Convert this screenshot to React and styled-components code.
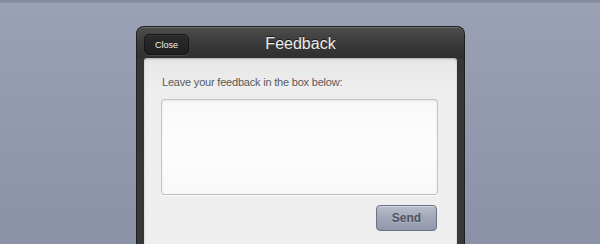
import styled, { createGlobalStyle } from "styled-components";

const GlobalStyle = createGlobalStyle`
  html, body {
    margin: 0;
    height: 100%;
  }
  body {
    font-family: "Liberation Sans", Arial, sans-serif;
    background: linear-gradient(#838a9e 0, #838a9e 2px, #9aa1b5 3px, #9198ad 60%, #8b92a7 100%);
    overflow: hidden;
  }
`;

const Page = styled.div`
  height: 244px;
  padding-top: 26px;
  box-sizing: border-box;
  overflow: hidden;
`;

const Frame = styled.div`
  margin-left: 136px;
  width: 329px;
  height: 218px;
  box-sizing: border-box;
  padding: 0 7px;
  border: 1px solid #1f1f1f;
  border-bottom: none;
  border-radius: 8px 8px 0 0;
  background: linear-gradient(#4d4d4d 0, #393939 18px, #2f2f2f 31px, #363636 32px, #383838 100%);
  box-shadow: inset 0 1px 0 rgba(255, 255, 255, 0.18);
  display: flex;
  flex-direction: column;
`;

const Header = styled.div`
  display: grid;
  grid-template-columns: 1fr auto 1fr;
  align-items: start;
  height: 31px;
  flex-shrink: 0;
  box-sizing: border-box;
  padding-top: 7px;
`;

const CloseButton = styled.button`
  justify-self: start;
  width: 45px;
  height: 21px;
  padding: 0;
  border: 1px solid #161616;
  border-radius: 5px;
  background: linear-gradient(#2c2c2c, #1f1f1f);
  box-shadow: 0 1px 0 rgba(255, 255, 255, 0.1), inset 0 1px 0 rgba(255, 255, 255, 0.06);
  color: #f2f2f2;
  font-family: "Liberation Sans", Arial, sans-serif;
  font-size: 9px;
  cursor: pointer;
`;

const Title = styled.h1`
  margin: 0;
  margin-top: 1px;
  font-size: 16px;
  font-weight: normal;
  line-height: 18px;
  color: #ededed;
  text-shadow: 0 -1px 0 rgba(0, 0, 0, 0.6);
`;

const Panel = styled.div`
  flex: 1;
  padding: 18px 19px 0 17px;
  border-radius: 3px 3px 0 0;
  background: linear-gradient(#e6e6e6, #eeeeee 30px, #efefef);
  box-shadow: inset 0 1px 2px rgba(0, 0, 0, 0.25);
  display: flex;
  flex-direction: column;
`;

const Label = styled.label`
  padding-left: 1px;
  font-size: 11px;
  line-height: 13px;
  color: #5a5a5a;
  letter-spacing: -0.2px;
`;

const Box = styled.textarea`
  margin-top: 10px;
  height: 96px;
  flex-shrink: 0;
  box-sizing: border-box;
  resize: none;
  border: 1px solid #c4c4c4;
  border-bottom-color: #bdbdbd;
  border-radius: 4px;
  background: linear-gradient(#f8f8f8, #fdfdfd 50%, #f8f8f8);
  box-shadow: inset 0 1px 2px rgba(0, 0, 0, 0.08), 0 1px 0 #fafafa;
  outline: none;
`;

const Actions = styled.div`
  display: flex;
  justify-content: flex-end;
  margin-top: 10px;
  padding-right: 1px;
`;

const SendButton = styled.button`
  width: 61px;
  height: 26px;
  padding: 0;
  border: 1px solid #6b7183;
  border-radius: 4px;
  background: linear-gradient(#b9bdcb, #a2a7b8 50%, #9197aa);
  box-shadow: inset 0 1px 0 rgba(255, 255, 255, 0.35);
  color: #4e5465;
  font-family: "Liberation Sans", Arial, sans-serif;
  font-size: 12px;
  font-weight: bold;
  text-shadow: 0 1px 0 rgba(255, 255, 255, 0.25);
  cursor: pointer;
`;

export default function App() {
  return (
    <>
      <GlobalStyle />
      <Page>
        <Frame>
          <Header>
            <CloseButton>Close</CloseButton>
            <Title>Feedback</Title>
          </Header>
          <Panel>
            <Label htmlFor="fb">Leave your feedback in the box below:</Label>
            <Box id="fb" />
            <Actions>
              <SendButton>Send</SendButton>
            </Actions>
          </Panel>
        </Frame>
      </Page>
    </>
  );
}
